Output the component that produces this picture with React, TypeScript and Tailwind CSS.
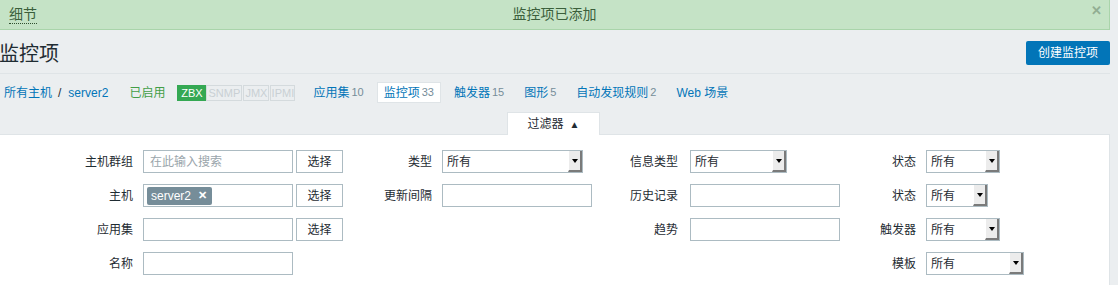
import React from "react";

const font = "font-['Liberation_Sans','Noto_Sans_CJK_SC',sans-serif]";

function Select({ w }: { w: string }) {
  return (
    <div
      className={`flex h-[23px] ${w} items-center border border-[#acbbc2] bg-white pl-[4px] text-[12px] text-[#1f2c33]`}
    >
      <span className="flex-1">所有</span>
      <div className="flex h-[21px] w-[14px] items-center justify-center border-b-2 border-r-2 border-b-[#7a7a7a] border-r-[#7a7a7a] bg-[#ececec] border-l border-l-white">
        <span className="h-0 w-0 border-l-[3px] border-r-[3px] border-t-[4px] border-l-transparent border-r-transparent border-t-black" />
      </div>
    </div>
  );
}

function Input({ children }: { children?: React.ReactNode }) {
  return (
    <div className="flex h-[23px] w-[150px] items-center border border-[#acbbc2] bg-white px-[3px] text-[12px]">
      {children}
    </div>
  );
}

function PickButton() {
  return (
    <button className="ml-[3px] h-[23px] w-[47px] border border-[#acbbc2] bg-white text-[12px] text-[#1f2c33]">
      选择
    </button>
  );
}

function Label({ w, children }: { w: string; children?: React.ReactNode }) {
  return <div className={`${w} text-right text-[12px] text-[#1f2c33]`}>{children}</div>;
}

function NavLink({ text, count, active }: { text: string; count?: string; active?: boolean }) {
  return (
    <div
      className={`flex h-[21px] items-center px-[6px] ${
        active ? "border border-[#dfe4e7] bg-white" : ""
      }`}
    >
      <span className="text-[#0275b8]">{text}</span>
      {count && <span className="ml-[2px] text-[11px] text-[#768d99]">{count}</span>}
    </div>
  );
}

export default function App() {
  return (
    <div className={`min-h-screen w-full bg-[#ebeef0] ${font}`}>
      <div className="w-[1110px]">
        {/* message */}
        <div className="relative flex h-[30px] items-center justify-center border-b border-r border-[#a9d4aa] bg-[#c5e3c6]">
          <span className="absolute left-[9px] top-[5px] border-b border-dotted border-[#2f4f2f] text-[14px] leading-[18px] text-[#3b5f3b]">
            细节
          </span>
          <span className="text-[14px] text-[#3b5f3b]">监控项已添加</span>
          <span className="absolute right-[7px] top-[1px] text-[13px] font-bold text-[#92ae93]">✕</span>
        </div>

        {/* header */}
        <div className="flex h-[44px] items-center justify-between border-b border-[#dfe4e7] pt-[2px]">
          <h1 className="-ml-[1px] mt-[2px] text-[20px] text-[#1f2c33]">监控项</h1>
          <button className="h-[24px] w-[84px] rounded-[2px] bg-[#0275b8] text-[12px] text-white">
            创建监控项
          </button>
        </div>

        {/* nav */}
        <div className="mt-[8px] flex h-[21px] items-center text-[12px]">
          <span className="ml-[4px] text-[#0275b8]">所有主机</span>
          <span className="ml-[6px] text-[#1f2c33]">/</span>
          <span className="ml-[7px] text-[#0275b8]">server2</span>
          <span className="ml-[21px] text-[#429e47]">已启用</span>
          <div className="ml-[12px] flex h-[16px] shrink-0 items-stretch text-[11px] leading-[14px]">
            <span className="w-[29px] shrink-0 bg-[#34a853] pt-[1px] text-center text-white">ZBX</span>
            <span className="w-[36px] shrink-0 border border-[#d4dadd] text-center text-[#c9d0d4]">SNMP</span>
            <span className="ml-[1px] w-[26px] shrink-0 border border-[#d4dadd] text-center text-[#c9d0d4]">JMX</span>
            <span className="ml-[1px] w-[25px] shrink-0 border border-[#d4dadd] text-center text-[#c9d0d4]">IPMI</span>
          </div>
          <div className="ml-[12px]">
            <NavLink text="应用集" count="10" />
          </div>
          <div className="ml-[7px]">
            <NavLink text="监控项" count="33" active />
          </div>
          <div className="ml-[7px]">
            <NavLink text="触发器" count="15" />
          </div>
          <div className="ml-[8px]">
            <NavLink text="图形" count="5" />
          </div>
          <div className="ml-[8px]">
            <NavLink text="自动发现规则" count="2" />
          </div>
          <div className="ml-[8px]">
            <NavLink text="Web 场景" />
          </div>
        </div>

        {/* filter tab */}
        <div className="mt-[9px] flex">
          <div className="relative z-10 -mb-[1px] ml-[507px] flex h-[23px] w-[93px] items-center justify-center gap-[6px] border border-b-0 border-[#dfe4e7] bg-white text-[12px] text-[#1f2c33]">
            <span>过滤器</span>
            <span className="text-[10px]">▲</span>
          </div>
        </div>

        {/* filter panel */}
        <div className="h-[151px] border-r border-t border-[#dfe4e7] bg-white pt-[15px]">
          <div className="flex flex-col gap-[11px]">
            {/* row 1 */}
            <div className="flex h-[23px] items-center">
              <Label w="w-[133px]">主机群组</Label>
              <div className="ml-[10px]">
                <Input>
                  <span className="ml-[3px] text-[#9aa5ab]">在此输入搜索</span>
                </Input>
              </div>
              <PickButton />
              <Label w="w-[89px]">类型</Label>
              <div className="ml-[10px] w-[150px]">
                <Select w="w-[141px]" />
              </div>
              <Label w="w-[86px]">信息类型</Label>
              <div className="ml-[12px] w-[150px]">
                <Select w="w-[97px]" />
              </div>
              <Label w="w-[76px]">状态</Label>
              <div className="ml-[10px]">
                <Select w="w-[74px]" />
              </div>
            </div>

            {/* row 2 */}
            <div className="flex h-[23px] items-center">
              <Label w="w-[133px]">主机</Label>
              <div className="ml-[10px]">
                <Input>
                  <span className="flex h-[18px] items-center rounded-[2px] bg-[#768d99] pl-[4px] pr-[5px] text-white">
                    server2
                    <span className="ml-[7px] text-[11px] font-bold">✕</span>
                  </span>
                </Input>
              </div>
              <PickButton />
              <Label w="w-[89px]">更新间隔</Label>
              <div className="ml-[10px]">
                <Input />
              </div>
              <Label w="w-[86px]">历史记录</Label>
              <div className="ml-[12px]">
                <Input />
              </div>
              <Label w="w-[76px]">状态</Label>
              <div className="ml-[10px]">
                <Select w="w-[62px]" />
              </div>
            </div>

            {/* row 3 */}
            <div className="flex h-[23px] items-center">
              <Label w="w-[133px]">应用集</Label>
              <div className="ml-[10px]">
                <Input />
              </div>
              <PickButton />
              <Label w="w-[89px]"></Label>
              <div className="ml-[10px] w-[150px]" />
              <Label w="w-[86px]">趋势</Label>
              <div className="ml-[12px]">
                <Input />
              </div>
              <Label w="w-[76px]">触发器</Label>
              <div className="ml-[10px]">
                <Select w="w-[74px]" />
              </div>
            </div>

            {/* row 4 */}
            <div className="flex h-[23px] items-center">
              <Label w="w-[133px]">名称</Label>
              <div className="ml-[10px]">
                <Input />
              </div>
              <div className="ml-[3px] w-[47px]" />
              <Label w="w-[89px]"></Label>
              <div className="ml-[10px] w-[150px]" />
              <Label w="w-[86px]"></Label>
              <div className="ml-[12px] w-[150px]" />
              <Label w="w-[76px]">模板</Label>
              <div className="ml-[10px]">
                <Select w="w-[98px]" />
              </div>
            </div>
          </div>
        </div>
      </div>
    </div>
  );
}
